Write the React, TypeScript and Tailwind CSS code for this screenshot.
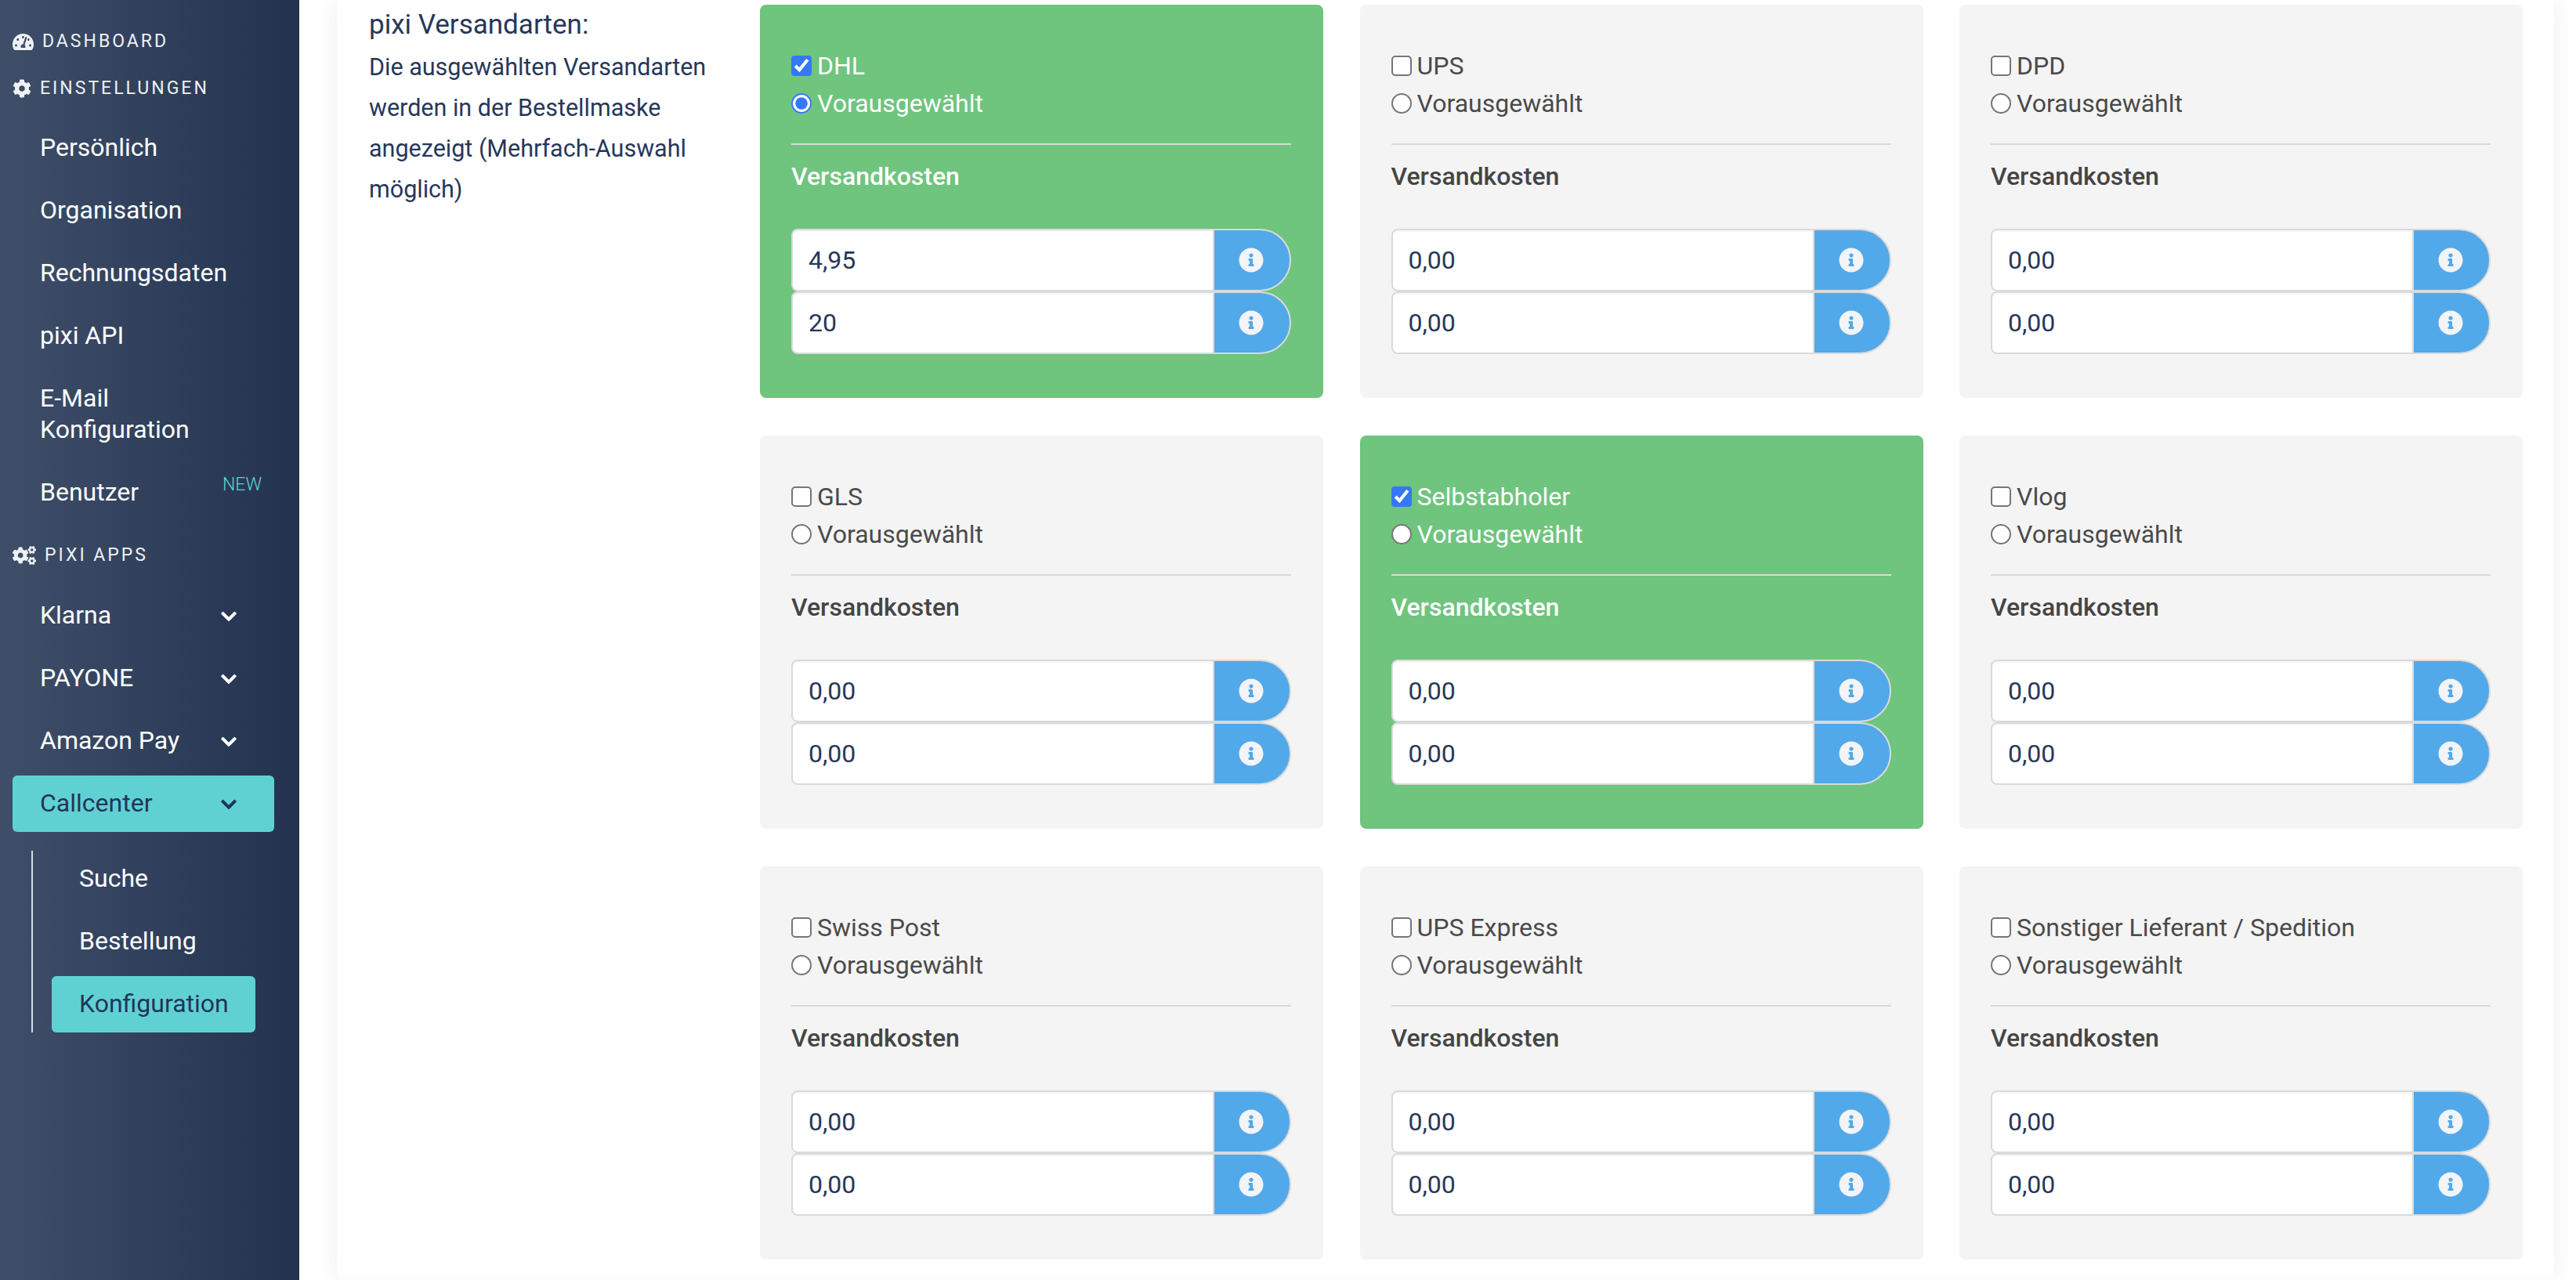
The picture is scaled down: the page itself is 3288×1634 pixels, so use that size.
import { FaChevronDown, FaCog, FaCogs, FaInfoCircle, FaTachometerAlt } from 'react-icons/fa';

type Carrier = {
  name: string;
  active?: boolean;
  preselected?: boolean;
  costs: [string, string];
};

const carriers: Carrier[] = [
  { name: 'DHL', active: true, preselected: true, costs: ['4,95', '20'] },
  { name: 'UPS', costs: ['0,00', '0,00'] },
  { name: 'DPD', costs: ['0,00', '0,00'] },
  { name: 'GLS', costs: ['0,00', '0,00'] },
  { name: 'Selbstabholer', active: true, costs: ['0,00', '0,00'] },
  { name: 'Vlog', costs: ['0,00', '0,00'] },
  { name: 'Swiss Post', costs: ['0,00', '0,00'] },
  { name: 'UPS Express', costs: ['0,00', '0,00'] },
  { name: 'Sonstiger Lieferant / Spedition', costs: ['0,00', '0,00'] },
];

function SectionLabel({ icon, label }: { icon: React.ReactNode; label: string }) {
  return (
    <div className="flex h-[60px] items-center gap-[11px] pl-4 text-[23px] tracking-[3px] text-[#eef1f5]">
      {icon}
      <span>{label}</span>
    </div>
  );
}

function NavItem({ label, badge, caret }: { label: string; badge?: string; caret?: boolean }) {
  return (
    <div
      className={`mx-4 flex min-h-[72px] w-[334px] items-center justify-between pl-[35px] pr-[47px] text-white ${
        caret ? 'pb-[3px]' : ''
      }`}
    >
      <span className="leading-[40px]">{label}</span>
      {badge && (
        <span className="mr-[-31px] mt-[-18px] text-[23px] font-light text-[#5fd1d5]">{badge}</span>
      )}
      {caret && <FaChevronDown size={22} className="mt-[5px] stroke-[20px]" />}
    </div>
  );
}

function CostInput({ value }: { value: string }) {
  return (
    <div className="flex h-20">
      <input
        readOnly
        defaultValue={value}
        className="h-full min-w-0 flex-1 rounded-l-lg border-2 border-[#dadada] bg-white pl-5 text-[#27375a] shadow-[inset_0_2px_2px_rgba(0,0,0,0.04)] outline-none"
      />
      <div className="ml-[-2px] flex w-[100px] items-center justify-center rounded-r-[40px] border-2 border-[#dadada] bg-[#52a9ea] pr-[2px]">
        <FaInfoCircle size={32} className="text-[#f2f4f7]" />
      </div>
    </div>
  );
}

function CarrierCard({ carrier }: { carrier: Carrier }) {
  return (
    <div
      className={`h-[502px] rounded-lg pl-10 pr-[41px] pt-[54px] ${
        carrier.active ? 'bg-[#6fc47e] text-white' : 'bg-[#f4f4f4] text-[#4a4a4a]'
      }`}
    >
      <label className="flex h-[48px] items-center gap-[7px]">
        <input
          type="checkbox"
          readOnly
          checked={!!carrier.active}
          className="m-0 h-[13px] w-[13px] accent-[#3478f6] [zoom:2]"
        />
        <span>{carrier.name}</span>
      </label>
      <label className="flex h-[48px] items-center gap-[7px]">
        <input
          type="radio"
          readOnly
          checked={!!carrier.preselected}
          className="m-0 h-[13px] w-[13px] accent-[#3478f6] [zoom:2]"
        />
        <span>Vorausgewählt</span>
      </label>
      <div className="mt-[27px] border-t-2 border-[#d9d9d9]" />
      <div className="mt-[20px] font-medium leading-[40px]">
        <span className={carrier.active ? 'text-white' : 'text-[#454545]'}>Versandkosten</span>
      </div>
      <div className="mt-[47px]">
        <CostInput value={carrier.costs[0]} />
        <CostInput value={carrier.costs[1]} />
      </div>
    </div>
  );
}

export default function App() {
  return (
    <div className="flex h-[1634px] w-[3288px] overflow-hidden bg-white font-['Roboto',sans-serif] text-[32px]">
      <aside className="w-[382px] shrink-0 bg-linear-to-r from-[#3f4f6a] to-[#23334f] pt-[23px]">
        <SectionLabel icon={<FaTachometerAlt size={27} />} label="DASHBOARD" />
        <SectionLabel icon={<FaCog size={24} />} label="EINSTELLUNGEN" />
        <nav className="mt-[9px] flex flex-col gap-2">
          <NavItem label="Persönlich" />
          <NavItem label="Organisation" />
          <NavItem label="Rechnungsdaten" />
          <NavItem label="pixi API" />
          <div className="mx-4 w-[334px] py-4 pl-[35px] leading-[40px] text-white">
            E-Mail
            <br />
            Konfiguration
          </div>
          <NavItem label="Benutzer" badge="NEW" />
        </nav>
        <div className="mb-[11px] mt-[15px]">
          <SectionLabel icon={<FaCogs size={30} />} label="PIXI APPS" />
        </div>
        <nav className="flex flex-col gap-2">
          <NavItem label="Klarna" caret />
          <NavItem label="PAYONE" caret />
          <NavItem label="Amazon Pay" caret />
          <div className="mx-4 flex h-[72px] w-[334px] items-center justify-between rounded-md bg-[#60d1d3] pb-[3px] pl-[35px] pr-[47px] text-[#22345a]">
            <span>Callcenter</span>
            <FaChevronDown size={22} className="mt-[5px] stroke-[20px]" />
          </div>
        </nav>
        <div className="ml-10 mt-6 flex flex-col gap-2 border-l-2 border-[#d8dadd] pl-6">
          <div className="flex h-[72px] items-center pb-[3px] pl-[35px] text-white">Suche</div>
          <div className="flex h-[72px] items-center pb-[3px] pl-[35px] text-white">Bestellung</div>
          <div className="flex h-[72px] w-[260px] items-center rounded-md bg-[#60d1d3] pb-[3px] pl-[35px] text-[#22345a]">
            Konfiguration
          </div>
        </div>
      </aside>
      <div className="flex-1 pl-12 pr-7">
        <main className="flex h-full bg-white pl-[41px] pr-10 pt-[6px] shadow-[0_0_26px_rgba(60,70,90,0.09),inset_0_-24px_24px_-24px_rgba(0,0,0,0.03)]">
          <div className="w-[499px] shrink-0 text-[#27375a]">
            <h2 className="mb-[2px] text-[35px] leading-[52px]">pixi Versandarten:</h2>
            <p className="w-[450px] text-[30.5px] leading-[52px]">
              Die ausgewählten Versandarten werden in der Bestellmaske angezeigt (Mehrfach-Auswahl möglich)
            </p>
          </div>
          <div className="grid h-fit flex-1 grid-cols-3 gap-x-[46.5px] gap-y-12">
            {carriers.map((carrier) => (
              <CarrierCard key={carrier.name} carrier={carrier} />
            ))}
          </div>
        </main>
      </div>
    </div>
  );
}
